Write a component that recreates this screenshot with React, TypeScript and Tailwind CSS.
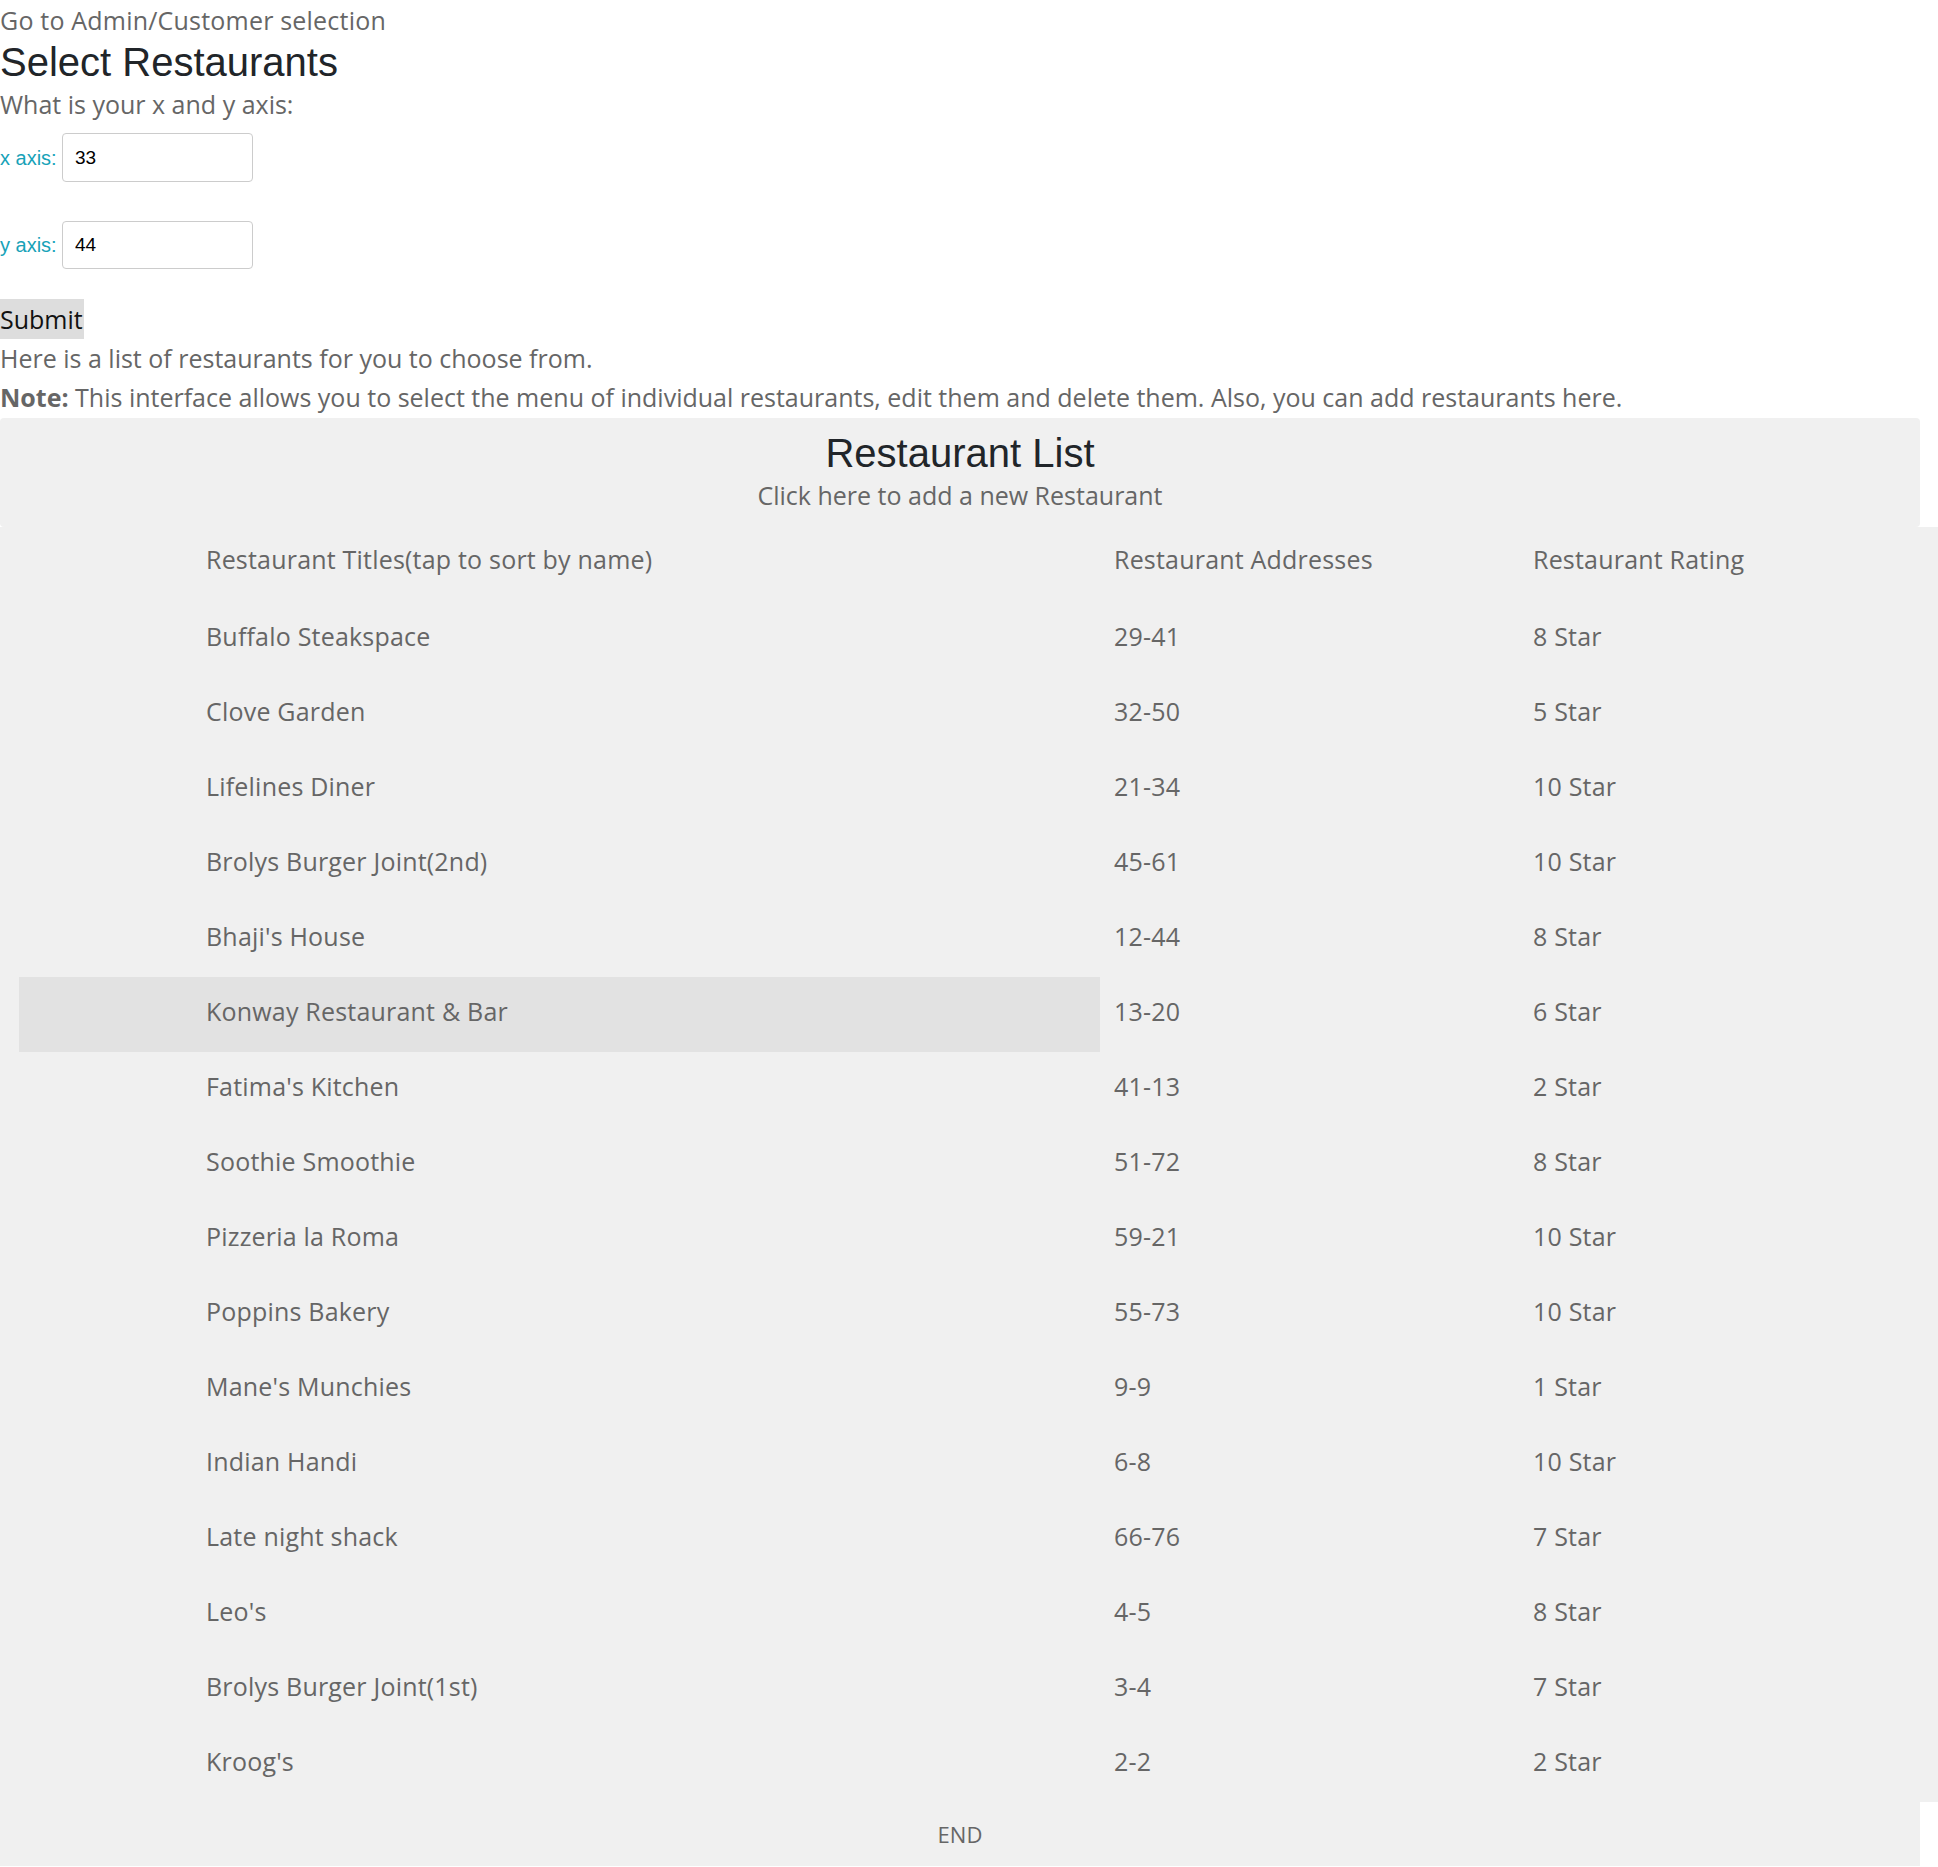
import { useState } from 'react'

type Restaurant = {
  name: string
  address: string
  rating: string
}

const restaurants: Restaurant[] = [
  { name: 'Buffalo Steakspace', address: '29-41', rating: '8 Star' },
  { name: 'Clove Garden', address: '32-50', rating: '5 Star' },
  { name: 'Lifelines Diner', address: '21-34', rating: '10 Star' },
  { name: 'Brolys Burger Joint(2nd)', address: '45-61', rating: '10 Star' },
  { name: "Bhaji's House", address: '12-44', rating: '8 Star' },
  { name: 'Konway Restaurant & Bar', address: '13-20', rating: '6 Star' },
  { name: "Fatima's Kitchen", address: '41-13', rating: '2 Star' },
  { name: 'Soothie Smoothie', address: '51-72', rating: '8 Star' },
  { name: 'Pizzeria la Roma', address: '59-21', rating: '10 Star' },
  { name: 'Poppins Bakery', address: '55-73', rating: '10 Star' },
  { name: "Mane's Munchies", address: '9-9', rating: '1 Star' },
  { name: 'Indian Handi', address: '6-8', rating: '10 Star' },
  { name: 'Late night shack', address: '66-76', rating: '7 Star' },
  { name: "Leo's", address: '4-5', rating: '8 Star' },
  { name: 'Brolys Burger Joint(1st)', address: '3-4', rating: '7 Star' },
  { name: "Kroog's", address: '2-2', rating: '2 Star' },
]

const App = () => {
  const [x, setX] = useState('33')
  const [y, setY] = useState('44')
  const [hovered, setHovered] = useState<string | null>('Konway Restaurant & Bar')

  return (
    <div className="min-h-[1867px] bg-white font-['Open_Sans',sans-serif] text-[25px] text-[#666666]">
      <a href="#" className="block leading-[40px] tracking-[0.2px] text-[#666666]">
        Go to Admin/Customer selection
      </a>
      <h1 className="font-['Liberation_Sans',Arial,sans-serif] text-[40px] leading-[44px] font-medium text-[#212529]">
        Select Restaurants
      </h1>
      <p className="leading-[40px]">What is your x and y axis:</p>

      <div className="mt-[9px] flex items-center font-['Liberation_Sans',Arial,sans-serif]">
        <label className="w-[62px] text-[20px] text-[#17a2b8]">x axis:</label>
        <input
          value={x}
          onChange={e => setX(e.target.value)}
          className="h-[49px] w-[191px] rounded-[4px] border border-[#cccccc] bg-white px-[12px] text-[19px] text-black outline-none"
        />
      </div>
      <div className="mt-[39px] flex items-center font-['Liberation_Sans',Arial,sans-serif]">
        <label className="w-[62px] text-[20px] text-[#17a2b8]">y axis:</label>
        <input
          value={y}
          onChange={e => setY(e.target.value)}
          className="h-[48px] w-[191px] rounded-[4px] border border-[#cccccc] bg-white px-[12px] text-[19px] text-black outline-none"
        />
      </div>

      <button className="mt-[30px] block h-[40px] bg-[#dddddd] pr-[1px] leading-[40px] text-[#111111]">Submit</button>
      <p className="leading-[38px]">Here is a list of restaurants for you to choose from.</p>
      <p className="leading-[41px]">
        <span className="font-bold">Note:</span> This interface allows you to select the menu of individual
        restaurants, edit them and delete them. Also, you can add restaurants here.
      </p>

      <div className="h-[109px] w-[1920px] rounded-[4px] bg-[#f0f0f0] pt-[12px] text-center">
        <h1 className="font-['Liberation_Sans',Arial,sans-serif] text-[40px] leading-[46px] font-medium text-[#212529]">
          Restaurant List
        </h1>
        <a href="#" className="block leading-[38px] text-[#666666]">
          Click here to add a new Restaurant
        </a>
      </div>

      <table className="w-full table-fixed border-collapse bg-[#f0f0f0] tracking-[0.2px]">
        <colgroup>
          <col className="w-[1100px]" />
          <col className="w-[419px]" />
          <col />
        </colgroup>
        <thead>
          <tr className="h-[75px] text-left">
            <th className="pb-[9px] pl-[206px] align-middle font-normal">Restaurant Titles(tap to sort by name)</th>
            <th className="pb-[9px] pl-[14px] align-middle font-normal">Restaurant Addresses</th>
            <th className="pb-[9px] pl-[14px] align-middle font-normal">Restaurant Rating</th>
          </tr>
        </thead>
        <tbody>
          {restaurants.map(r => (
            <tr key={r.name} className="h-[75px]">
              <td className="p-0 align-top">
                <div
                  onMouseEnter={() => setHovered(r.name)}
                  className={`ml-[19px] flex h-[75px] items-center pb-[6px] pl-[187px] ${
                    hovered === r.name ? 'bg-[#e2e2e2]' : ''
                  }`}
                >
                  {r.name}
                </div>
              </td>
              <td className="pb-[6px] pl-[14px] align-middle">{r.address}</td>
              <td className="pb-[6px] pl-[14px] align-middle">{r.rating}</td>
            </tr>
          ))}
        </tbody>
      </table>

      <div className="h-[64px] w-[1920px] bg-[#f0f0f0] text-center text-[22px] leading-[64px]">END</div>
    </div>
  )
}

export default App
